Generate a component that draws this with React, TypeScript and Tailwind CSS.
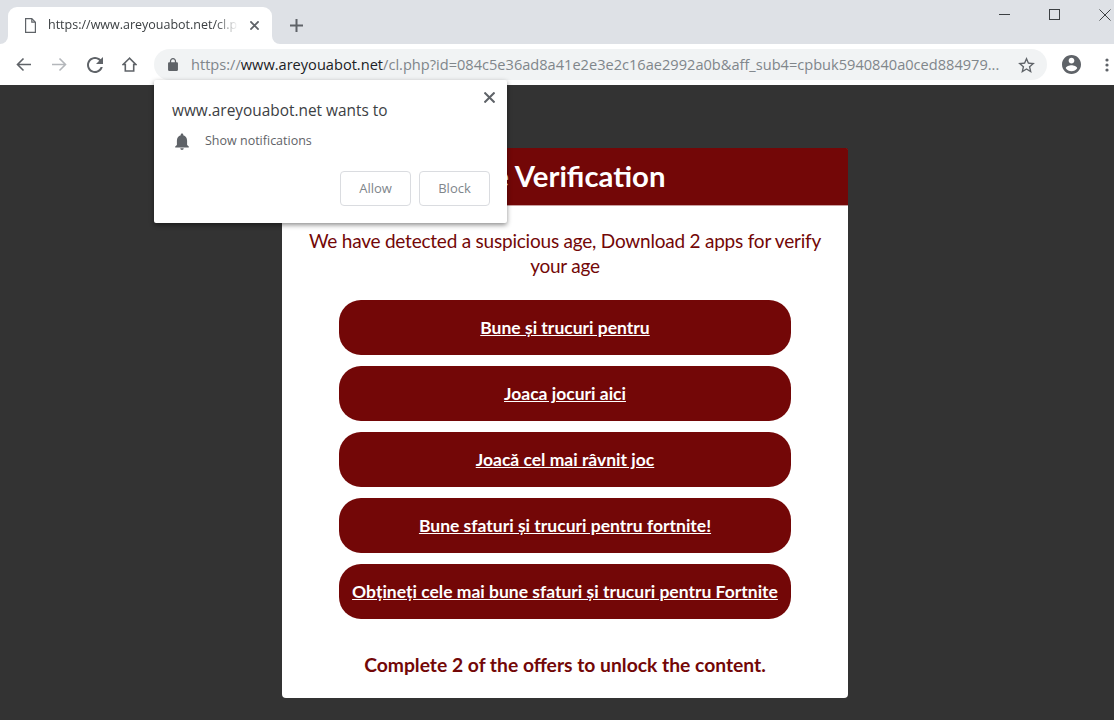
import React from 'react'

const offers = [
  'Bune și trucuri pentru',
  'Joaca jocuri aici',
  'Joacă cel mai râvnit joc',
  'Bune sfaturi și trucuri pentru fortnite!',
  'Obțineți cele mai bune sfaturi și trucuri pentru Fortnite',
]

const uiFont = "font-['Open_Sans',sans-serif]"
const pageFont = "font-['Lato',sans-serif]"

const Cross = ({ className, width }: { className: string; width: number }) => (
  <svg viewBox="0 0 12 12" className={className} fill="none" stroke="currentColor" strokeWidth={width}>
    <path d="M.5.5l11 11M11.5.5l-11 11" />
  </svg>
)

const Arrow = ({ className, flip }: { className: string; flip?: boolean }) => (
  <svg viewBox="0 0 15 15" className={className} fill="none" stroke="currentColor" strokeWidth={1.6}>
    <path d={flip ? 'M0 7.5h13.5M7.5 1.5l6 6-6 6' : 'M15 7.5H1.5M7.5 1.5l-6 6 6 6'} />
  </svg>
)

const MenuDots = () => (
  <svg viewBox="0 0 4 14" className="ml-[24px] h-[14px] w-[4px] fill-[#5f6368]">
    <circle cx="2" cy="2" r="1.6" />
    <circle cx="2" cy="7" r="1.6" />
    <circle cx="2" cy="12" r="1.6" />
  </svg>
)

function PermissionPopup() {
  return (
    <div className="absolute left-[154px] top-[80px] z-10 h-[143px] w-[353px] rounded-[2px] bg-white shadow-[0_2px_5px_rgba(0,0,0,0.45)]">
      <Cross className="absolute right-[12px] top-[12px] h-[11px] w-[11px] text-[#5f6368]" width={2.2} />
      <div className="pl-[18px] pt-[20px] text-[15.4px] leading-[22px] text-[#3c4043]">www.areyouabot.net wants to</div>
      <div className="mt-[10px] flex items-center pl-[21px]">
        <svg viewBox="4 2 16 20" className="h-[17px] w-[14px] fill-[#5f6368]">
          <path d="M12 22c1.1 0 2-.9 2-2h-4c0 1.1.89 2 2 2zm6-6v-5c0-3.07-1.64-5.64-4.5-6.32V4c0-.83-.67-1.5-1.5-1.5s-1.5.67-1.5 1.5v.68C7.63 5.36 6 7.92 6 11v5l-2 2v1h16v-1l-2-2z" />
        </svg>
        <span className="ml-[16px] text-[12.5px] text-[#5f6368]">Show notifications</span>
      </div>
      <div className="mt-[20px] flex justify-end gap-[8px] pr-[17px]">
        <div className="flex h-[35px] w-[71px] items-center justify-center rounded-[4px] border border-[#dadce0] text-[13px] font-medium text-[#80868b]">Allow</div>
        <div className="flex h-[35px] w-[71px] items-center justify-center rounded-[4px] border border-[#dadce0] text-[13px] font-medium text-[#80868b]">Block</div>
      </div>
    </div>
  )
}

function BrowserChrome() {
  return (
    <div className={`${uiFont} relative`}>
      <div className="flex h-[44px] items-end bg-[#dee1e6] pl-[8px]">
        <div className="relative flex h-[37px] w-[264px] items-center rounded-t-[9px] bg-white pl-[17px]">
          <div className="absolute bottom-0 left-[-8px] h-[8px] w-[8px] bg-white">
            <div className="h-full w-full rounded-br-[8px] bg-[#dee1e6]" />
          </div>
          <div className="absolute bottom-0 right-[-8px] h-[8px] w-[8px] bg-white">
            <div className="h-full w-full rounded-bl-[8px] bg-[#dee1e6]" />
          </div>
          <svg viewBox="0 0 11 15" className="h-[15px] w-[11px] shrink-0 text-[#5f6368]" fill="none" stroke="currentColor" strokeWidth={1.2}>
            <path d="M.6.6h6.2l3.6 3.6v10.2H.6zM6.8.6v3.6h3.6" />
          </svg>
          <div className="ml-[12px] w-[190px] overflow-hidden whitespace-nowrap text-[12.5px] text-[#3c4043] [mask-image:linear-gradient(to_right,black_88%,transparent)]">
            https://www.areyouabot.net/cl.php?id=084c5e36
          </div>
          <Cross className="ml-[12px] h-[9px] w-[9px] text-[#5f6368]" width={2.4} />
        </div>
        <svg viewBox="0 0 13 13" className="mb-[12px] ml-[18px] h-[13px] w-[13px] text-[#5f6368]" fill="none" stroke="currentColor" strokeWidth={2}>
          <path d="M6.5 0v13M0 6.5h13" />
        </svg>
        <div className="mb-[24px] ml-auto flex h-[11px] items-center gap-[39px] pr-[3px] text-[#3c4043]">
          <div className="h-px w-[11px] bg-[#3c4043]" />
          <div className="h-[11px] w-[11px] border border-[#3c4043]" />
          <Cross className="h-[12px] w-[12px]" width={1} />
        </div>
      </div>
      <div className="flex h-[41px] items-center bg-white pl-[16px]">
        <Arrow className="h-[15px] w-[15px] text-[#5f6368]" />
        <Arrow flip className="ml-[21px] h-[15px] w-[15px] text-[#b4b7bb]" />
        <svg viewBox="4 4 16 16" className="ml-[20px] h-[16px] w-[16px] fill-[#5f6368]">
          <path d="M17.65 6.35C16.2 4.9 14.21 4 12 4c-4.42 0-7.99 3.58-7.99 8s3.57 8 7.99 8c3.73 0 6.84-2.55 7.73-6h-2.08c-.82 2.33-3.04 4-5.65 4-3.31 0-6-2.69-6-6s2.69-6 6-6c1.66 0 3.14.69 4.22 1.78L13 11h7V4l-2.35 2.35z" />
        </svg>
        <svg viewBox="0 0 15 15" className="ml-[19px] h-[15px] w-[15px] text-[#5f6368]" fill="none" stroke="currentColor" strokeWidth={1.6}>
          <path d="M7.5 1.2L1.2 7.5h2.1v6.5h8.4V7.5h2.1z" />
        </svg>
        <div className="ml-[17px] flex h-[31px] w-[893px] items-center rounded-full bg-[#f1f3f4] pl-[14px] pr-[12px]">
          <svg viewBox="4 1 16 21" className="h-[13px] w-[10px] fill-[#5f6368]">
            <path d="M18 8h-1V6c0-2.76-2.24-5-5-5S7 3.24 7 6v2H6c-1.1 0-2 .9-2 2v10c0 1.1.9 2 2 2h12c1.1 0 2-.9 2-2V10c0-1.1-.9-2-2-2zM9 6c0-1.66 1.34-3 3-3s3 1.34 3 3v2H9V6z" />
          </svg>
          <div className="ml-[13px] whitespace-nowrap text-[14.6px] text-[#80868b]">
            https://<span className="text-[#202124]">www.areyouabot.net</span>
            /cl.php?id=084c5e36ad8a41e2e3e2c16ae2992a0b&amp;aff_sub4=cpbuk5940840a0ced884979...
          </div>
          <svg viewBox="2 2 20 19" className="ml-auto h-[16px] w-[17px] fill-[#5f6368]">
            <path d="M22 9.24l-7.19-.62L12 2 9.19 8.63 2 9.24l5.46 4.73L5.82 21 12 17.27 18.18 21l-1.63-7.03L22 9.24zM12 15.4l-3.76 2.27 1-4.28-3.32-2.88 4.38-.38L12 6.1l1.71 4.04 4.38.38-3.32 2.88 1 4.28L12 15.4z" />
          </svg>
        </div>
        <svg viewBox="2 2 20 20" className="ml-[15px] h-[19px] w-[19px] fill-[#5f6368]">
          <path d="M12 2C6.48 2 2 6.48 2 12s4.48 10 10 10 10-4.48 10-10S17.52 2 12 2zm0 3c1.66 0 3 1.34 3 3s-1.34 3-3 3-3-1.34-3-3 1.34-3 3-3zm0 14.2c-2.5 0-4.71-1.28-6-3.22.03-1.99 4-3.08 6-3.08 1.99 0 5.97 1.09 6 3.08-1.29 1.94-3.5 3.22-6 3.22z" />
        </svg>
        <MenuDots />
      </div>
      <PermissionPopup />
    </div>
  )
}

export default function App() {
  return (
    <div className="h-[720px] w-[1114px] overflow-hidden bg-[#333333]">
      <BrowserChrome />
      <div className={`${pageFont} ml-[282px] mt-[63px] h-[550px] w-[566px] rounded-[4px] bg-white`}>
        <div className="flex h-[58px] items-center justify-center rounded-t-[2px] border-b border-[#c9a0a0] bg-[#730707] pb-[2px] pr-[7px] text-[29.3px] font-bold text-white">
          Age Verification
        </div>
        <p className="mx-auto mt-[22px] w-[530px] text-center text-[19px] leading-[25px] tracking-[-0.22px] text-[#730707]">
          We have detected a suspicious age, Download 2 apps for verify your age
        </p>
        <div className="mt-[22px] flex flex-col items-center gap-[11px]">
          {offers.map((offer) => (
            <a key={offer} className="flex h-[55px] w-[452px] items-center justify-center rounded-[22px] bg-[#730707] pt-[2px] text-[17.5px] font-bold text-white underline">
              {offer}
            </a>
          ))}
        </div>
        <p className="mt-[32px] text-center text-[19.3px] font-bold leading-[28px] text-[#730707]">Complete 2 of the offers to unlock the content.</p>
      </div>
    </div>
  )
}
